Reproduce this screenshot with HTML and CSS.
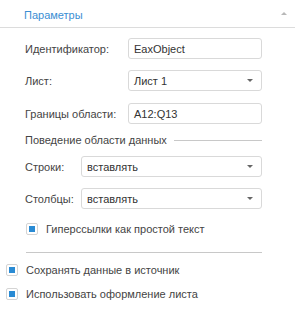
FILE: index.html
```html
<!DOCTYPE html>
<html lang="ru">
<head>
<meta charset="utf-8">
<link rel="stylesheet" href="styles.css">
</head>
<body>
<div class="panel">
  <div class="header">
    <span class="title">Параметры</span>
    <span class="collapse"></span>
  </div>
  <div class="content">
    <div class="row r1">
      <span class="label wide">Идентификатор:</span>
      <div class="field">EaxObject</div>
    </div>
    <div class="row r2">
      <span class="label wide">Лист:</span>
      <div class="field select">Лист 1<span class="arrow"></span></div>
    </div>
    <div class="row r3">
      <span class="label wide">Границы области:</span>
      <div class="field">A12:Q13</div>
    </div>
    <div class="section">
      <span class="section-title">Поведение области данных</span>
      <span class="section-line"></span>
    </div>
    <div class="row r4">
      <span class="label narrow">Строки:</span>
      <div class="field select">вставлять<span class="arrow"></span></div>
    </div>
    <div class="row r5">
      <span class="label narrow">Столбцы:</span>
      <div class="field select">вставлять<span class="arrow"></span></div>
    </div>
    <label class="check inner">
      <span class="box"></span>
      <span>Гиперссылки как простой текст</span>
    </label>
    <div class="sep"></div>
  </div>
  <label class="check outer c1">
    <span class="box"></span>
    <span>Сохранять данные в источник</span>
  </label>
  <label class="check outer c2">
    <span class="box"></span>
    <span>Использовать оформление листа</span>
  </label>
</div>
</body>
</html>
```

FILE: styles.css
```css
* { box-sizing: border-box; }
html, body { margin: 0; padding: 0; background: #fff; }
body {
  font-family: "Liberation Sans", Arial, sans-serif;
  font-size: 11px;
  color: #444;
}
.panel { width: 295px; height: 310px; }
.header {
  height: 28px;
  border-bottom: 1px solid #dcdcdc;
  display: flex;
  align-items: center;
  justify-content: space-between;
  padding: 0 8px 0 24px;
}
.title { color: #3b8ed3; margin-top: 2px; }
.collapse {
  width: 0; height: 0;
  border-left: 3px solid transparent;
  border-right: 3px solid transparent;
  border-bottom: 3px solid #b8b8b8;
  margin-top: -1px;
}
.content { padding: 10px 33px 0 25px; }
.row { display: flex; align-items: center; height: 21px; }
.r2 { margin-top: 11px; }
.r3 { margin-top: 12px; }
.r4 { margin-top: 8px; }
.r5 { margin-top: 11px; }
.label { flex: none; color: #444; }
.label.wide { width: 103px; }
.label.narrow { width: 56px; }
.field {
  flex: 1;
  height: 21px;
  border: 1px solid #d9d9d9;
  border-radius: 3px;
  padding: 0 8px 0 5px;
  display: flex;
  align-items: center;
  color: #333;
}
.select { justify-content: space-between; }
.arrow {
  width: 0; height: 0;
  border-left: 3px solid transparent;
  border-right: 3px solid transparent;
  border-top: 3px solid #666;
}
.section {
  display: flex;
  align-items: center;
  margin-top: 8px;
  height: 16px;
}
.section-title { flex: none; color: #444; }
.section-line { flex: 1; height: 1px; background: #c8c8c8; margin-left: 7px; margin-top: 1px; }
.check { display: flex; align-items: center; height: 16px; gap: 8px; }
.check.inner { margin-top: 12px; padding-left: 1px; }
.box {
  flex: none;
  width: 12px; height: 12px;
  border: 1px solid #d4d4d4;
  border-radius: 2px;
  background: #fff;
  display: flex;
  align-items: center;
  justify-content: center;
}
.box::after {
  content: "";
  width: 6px; height: 6px;
  background: #2a8bd4;
}
.sep { height: 1px; background: #c8c8c8; margin-top: 15px; margin-left: 1px; }
.check.outer { padding-left: 6px; gap: 8px; }
.c1 { margin-top: 9px; }
.c2 { margin-top: 8px; }
```
